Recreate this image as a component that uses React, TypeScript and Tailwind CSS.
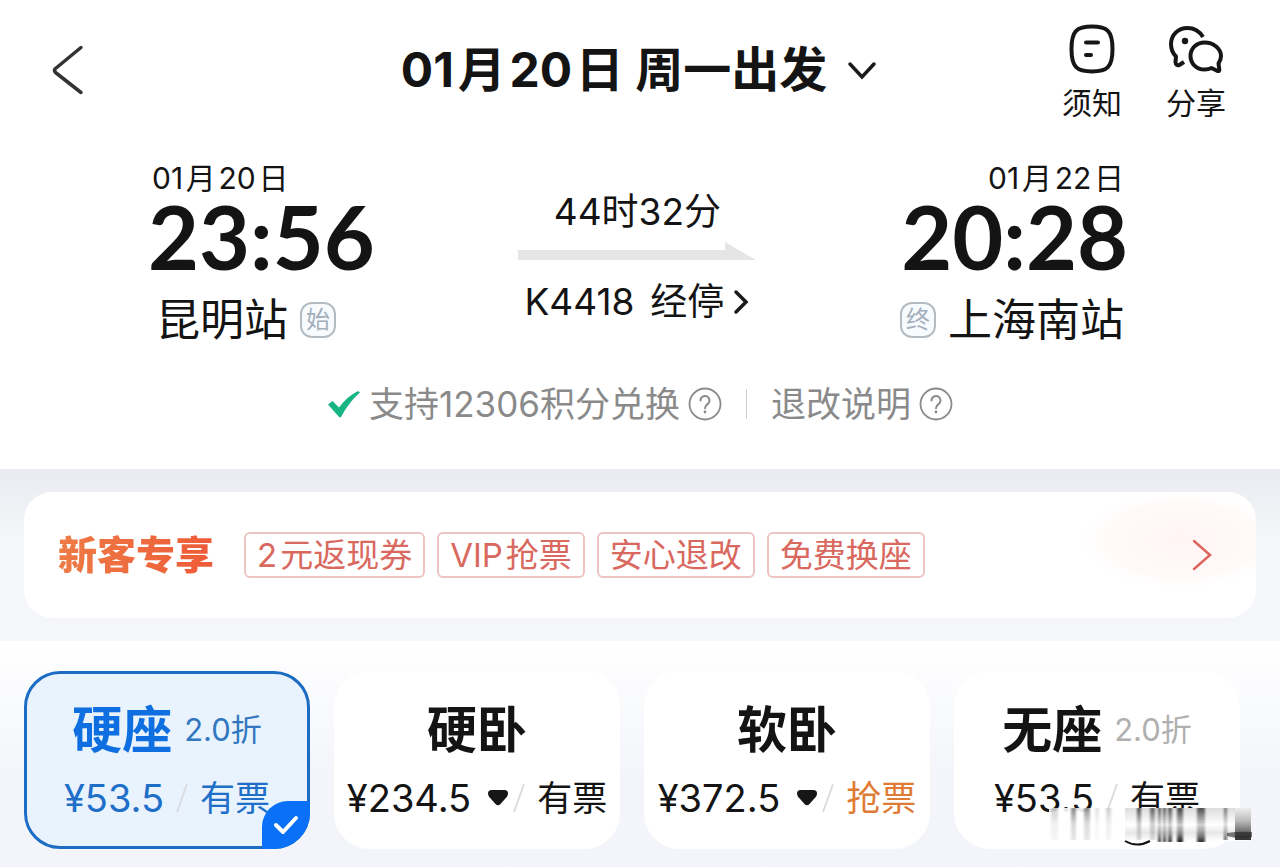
import { useState } from "react";

type Seat = {
    id: string;
    name: string;
    discount?: string;
    price: string;
    status: string;
    hasTiers?: boolean;
    grab?: boolean;
};

const SEATS: Seat[] = [
    { id: "hard-seat", name: "硬座", discount: "2.0折", price: "¥53.5", status: "有票" },
    { id: "hard-sleeper", name: "硬卧", price: "¥234.5", status: "有票", hasTiers: true },
    { id: "soft-sleeper", name: "软卧", price: "¥372.5", status: "抢票", hasTiers: true, grab: true },
    { id: "standing", name: "无座", discount: "2.0折", price: "¥53.5", status: "有票" },
];

// \u200a = hair space between latin and hanzi
const PERKS = ["2\u200a元返现券", "VIP\u200a抢票", "安心退改", "免费换座"];

// x, width, opacity
const STREAKS = [
    [4, 7, 0.2],
    [24, 5, 0.5],
    [37, 6, 0.45],
    [48, 4, 0.12],
    [59, 5, 0.2],
    [90, 4, 0.7],
    [103, 5, 0.6],
    [111, 3, 0.85],
    [116, 3, 0.85],
    [121, 4, 0.85],
    [130, 6, 0.95],
    [150, 8, 0.85],
    [177, 3, 0.7],
];

function QuestionIcon() {
    return (
        <svg width="34" height="34" viewBox="0 0 34 34" fill="none" stroke="#8a8a8a" aria-hidden="true">
            <circle cx="17" cy="17" r="15.500" strokeWidth="1.800" />
            <path
                d="M12.500 13.500a4.500 4.500 0 1 1 7 3.700c-1.700 1.100-2.500 1.800-2.500 4"
                strokeWidth="2"
                strokeLinecap="round"
            />
            <circle cx="17" cy="25" r="1.400" fill="#8a8a8a" stroke="none" />
        </svg>
    );
}

function Header() {
    return (
        <header className="flex items-center justify-between px-12 pt-6">
            <button aria-label="返回" className="w-[168px] pb-1">
                <svg width="40" height="50" viewBox="0 0 40 50" fill="none">
                    <path
                        d="M33 2.500 7.500 23.500q-2 2 0 4L33 47.500"
                        stroke="#333"
                        strokeWidth="3.500"
                        strokeLinecap="round"
                        strokeLinejoin="round"
                    />
                </svg>
            </button>

            <button className="flex items-center gap-5 pb-1 text-[48px] leading-[60px] font-bold">
                <h1>{"01\u200a月\u200a20\u200a日 周一出发"}</h1>
                <svg width="30" height="20" viewBox="0 0 30 20" fill="none" aria-hidden="true">
                    <path d="m3 4 12 13L27 4" stroke="#1a1a1a" strokeWidth="3.500" strokeLinecap="round" />
                </svg>
            </button>

            <div className="flex gap-11 pr-1.5 text-[30px] leading-[34px]">
                <button className="flex flex-col items-center gap-3">
                    <svg width="48" height="50" viewBox="0 0 48 50" fill="none" stroke="#161616" aria-hidden="true">
                        <path
                            d="M24 2.500c15 0 20.500 4 20.500 22.500S39 47.500 24 47.500 3.500 43.500 3.500 25 9 2.500 24 2.500Z"
                            strokeWidth="4"
                        />
                        <path d="M18 18.500h12M18 31h5" strokeWidth="4" strokeLinecap="round" />
                    </svg>
                    须知
                </button>
                <button className="flex flex-col items-center gap-3">
                    <svg width="58" height="50" viewBox="0 0 58 50" fill="none" stroke="#161616" aria-hidden="true">
                        <path
                            d="M36 13C32 6.500 26.500 4 20.500 4 11 4 4 11 4 20c0 6 2 9.500 5 12.500L8.500 38q.3 4 3.800 3l4.700-3"
                            strokeWidth="4"
                            strokeLinejoin="round"
                        />
                        <circle cx="18" cy="17" r="3.200" fill="#161616" stroke="none" />
                        <path
                            d="M37.500 18.500C29.500 18.500 23.500 24.500 23.500 32S29.500 45.500 37.500 45.500q4 0 7-1.500l6 3q2 .5 1.800-1.500l-.8-6q2.500-3.500 2.500-7.500C54 24.500 46.500 18.500 37.500 18.500Z"
                            strokeWidth="4"
                            strokeLinejoin="round"
                        />
                    </svg>
                    分享
                </button>
            </div>
        </header>
    );
}

function StationBadge({ text }: { text: string }) {
    return (
        <span className="grid h-9 w-9 place-items-center rounded-xl border-2 border-[#b4bcc2] bg-[#f8fbfd] text-[24px] leading-none text-[#a3afbc]">
            {text}
        </span>
    );
}

function Trip() {
    return (
        <div className="mt-10 flex items-start justify-between pr-[152px] pl-[148px]">
            <div>
                <div className="pl-1 text-[30px] leading-[36px]">{"01\u200a月\u200a20\u200a日"}</div>
                <div className="font-[Lato] text-[88px] leading-[80px] font-bold">23:56</div>
                <div className="mt-5 flex items-center gap-3 pl-2 text-[44px] leading-[48px]">
                    昆明站
                    <StationBadge text="始" />
                </div>
            </div>

            <div className="flex flex-col items-center pt-7 text-[37px] leading-[48px]">
                <div>44时32分</div>
                <svg className="mt-1" width="238" height="22" viewBox="0 0 238 22" aria-hidden="true">
                    <path d="M0 10h207V2l31 18H0Z" fill="#e5e5e5" />
                </svg>
                <button className="mt-4 flex items-center gap-2">
                    <span className="mr-2">K4418</span>
                    经停
                    <svg width="18" height="28" viewBox="0 0 18 28" fill="none" aria-hidden="true">
                        <path d="m4 4 10 10L4 24" stroke="#1a1a1a" strokeWidth="3.500" strokeLinecap="round" />
                    </svg>
                </button>
            </div>

            <div className="flex flex-col items-end">
                <div className="pr-1 text-[30px] leading-[36px]">{"01\u200a月\u200a22\u200a日"}</div>
                <div className="font-[Lato] text-[88px] leading-[80px] font-bold">20:28</div>
                <div className="mt-5 flex items-center gap-3 pr-1 text-[44px] leading-[48px]">
                    <StationBadge text="终" />
                    上海南站
                </div>
            </div>
        </div>
    );
}

function Notes() {
    return (
        <div className="mt-10 flex items-center justify-center text-[35px] leading-[40px] text-[#8a8a8a]">
            <svg className="mr-2" width="34" height="30" viewBox="0 0 34 30" aria-hidden="true">
                <path d="M1 15.500 5.500 12l6.500 6.500Q20 7.500 31 2l2 1.500Q22 13 14 28l-1.500.5Z" fill="#17b583" />
            </svg>
            <button className="flex items-center gap-2">
                支持12306积分兑换
                <QuestionIcon />
            </button>
            <span className="mx-6 h-[30px] w-px bg-[#cfcfcf]" />
            <button className="flex items-center gap-2">
                退改说明
                <QuestionIcon />
            </button>
        </div>
    );
}

function PromoCard() {
    return (
        <section className="bg-linear-to-b from-[#e9ebf0] to-[#f4f6fa] to-40% px-6 py-[23px]">
            <a
                href="#newcomer"
                className="flex items-center rounded-[28px] bg-white bg-[radial-gradient(ellipse_100px_48px_at_94%_38%,#fff5f4_0%,#fff9f8_70%,transparent_100%)] py-10 pr-11 pl-[34px]"
            >
                <span className="bg-linear-to-r from-[#ee7b45] to-[#ee5a38] bg-clip-text text-[39px] leading-[46px] font-black text-transparent">
                    新客专享
                </span>
                <ul className="ml-[30px] flex flex-1 gap-3 text-[33px] leading-[42px] text-[#d9695f]">
                    {PERKS.map((perk) => (
                        <li key={perk} className="rounded-md border-2 border-[#edc4c2] px-[11px]">
                            {perk}
                        </li>
                    ))}
                </ul>
                <svg width="20" height="32" viewBox="0 0 20 32" fill="none" aria-hidden="true">
                    <path d="m2 2 16 14L2 30" stroke="#dd655f" strokeWidth="2.500" strokeLinecap="round" />
                </svg>
            </a>
        </section>
    );
}

function Streaks() {
    return (
        <svg
            className="absolute -right-4 bottom-0"
            width="206"
            height="38"
            viewBox="0 0 206 38"
            aria-hidden="true"
        >
            <defs>
                <linearGradient id="streak" x1="0" y1="0" x2="0" y2="1">
                    <stop offset="0" stopColor="#111" stopOpacity="0.8" />
                    <stop offset="0.5" stopColor="#111" stopOpacity="0.2" />
                    <stop offset="0.75" stopColor="#111" stopOpacity="0.5" />
                    <stop offset="1" stopColor="#111" />
                </linearGradient>
                <linearGradient id="streakLight" x1="0" y1="0" x2="0" y2="1">
                    <stop offset="0" stopColor="#111" />
                    <stop offset="0.5" stopColor="#111" stopOpacity="0.3" />
                    <stop offset="1" stopColor="#111" stopOpacity="0.2" />
                </linearGradient>
                <linearGradient id="fade" x1="0" y1="0" x2="0" y2="1">
                    <stop offset="0" stopColor="#ddd" />
                    <stop offset="0.5" stopColor="#fff" />
                    <stop offset="0.75" stopColor="#e8e8e8" />
                    <stop offset="1" stopColor="#fff" />
                </linearGradient>
                <linearGradient id="edge" x1="0" y1="0" x2="0" y2="1">
                    <stop offset="0" stopColor="#eee" />
                    <stop offset="0.4" stopColor="#bbb" />
                    <stop offset="0.7" stopColor="#777" />
                    <stop offset="1" stopColor="#333" />
                </linearGradient>
                <filter id="soft" x="-50%" width="200%" y="0" height="100%">
                    <feGaussianBlur stdDeviation="0.8 0" />
                </filter>
            </defs>
            <rect x="2" width="202" height="33" fill="#fff" fillOpacity="0.9" />
            <rect x="78" width="126" height="33" fill="url(#fade)" />
            {STREAKS.map(([x, w, o]) => (
                <rect
                    key={x}
                    x={x}
                    width={w}
                    height={o > 0.8 ? 34 : 32}
                    rx="1"
                    fill={x < 110 ? "url(#streakLight)" : "url(#streak)"}
                    opacity={o}
                    filter="url(#soft)"
                />
            ))}
            <rect x="188" width="16" height="32" fill="url(#edge)" />
            <path d="M180 25q12-2 25-1v5q-10 3-25-1Z" fill="#222" opacity="0.6" />
            <path d="M78 33q12 7 25 0" fill="none" stroke="#111" strokeWidth="2" />
        </svg>
    );
}

function SeatCard({ seat, selected, onSelect }: { seat: Seat; selected: boolean; onSelect: () => void }) {
    return (
        <button
            onClick={onSelect}
            aria-pressed={selected}
            className={`relative flex flex-col items-center rounded-[36px] border-3 pt-6 pb-6 whitespace-nowrap ${
                selected ? "border-[#1c6cc4] bg-[#e9f3fd] text-[#1f6fc9]" : "border-white bg-white"
            }`}
        >
            <span className="flex items-center gap-3 text-[50px] leading-[64px] font-bold">
                <span className={selected ? "text-[#0f6fe0]" : ""}>{seat.name}</span>
                {seat.discount && (
                    <span
                        className={`text-[31px] font-normal ${selected ? "text-[#3277c0]" : "text-[#b0b0b0]"}`}
                    >
                        {seat.discount}
                    </span>
                )}
            </span>

            <span className="mt-3 flex items-center text-[35px] leading-[48px]">
                <span className="text-[38px]">{seat.price}</span>
                {seat.hasTiers && (
                    <svg className="ml-4" width="22" height="18" viewBox="0 0 22 18" aria-hidden="true">
                        <path
                            d="M4.500 1h13q3.500 0 3.500 3.500 0 2-1.500 3.800l-6 6.700q-2.500 2.500-5 0l-6-6.700Q1 6.500 1 4.500 1 1 4.500 1Z"
                            fill="#161616"
                        />
                    </svg>
                )}
                <svg
                    className={seat.hasTiers ? "mr-3 ml-1" : "mx-3"}
                    width="12"
                    height="32"
                    viewBox="0 0 12 32"
                    aria-hidden="true"
                >
                    <path d="M11 2 1 30" stroke="#d9dce0" strokeWidth="2" />
                </svg>
                <span className={seat.grab ? "text-[#e07b35]" : ""}>{seat.status}</span>
            </span>

            {selected && (
                <span className="absolute -right-[3px] -bottom-[3px] grid h-12 w-12 place-items-center rounded-tl-[26px] rounded-br-[36px] bg-[#0a70f5]">
                    <svg width="26" height="20" viewBox="0 0 26 20" fill="none" aria-hidden="true">
                        <path
                            d="m3 10 7 7L23 3"
                            stroke="#fff"
                            strokeWidth="4"
                            strokeLinecap="round"
                            strokeLinejoin="round"
                        />
                    </svg>
                </span>
            )}
            {seat.id === "standing" && <Streaks />}
        </button>
    );
}

export default function App() {
    const [seatId, setSeatId] = useState("hard-seat");

    return (
        <main className="flex min-h-screen flex-col overflow-x-hidden bg-white font-[Inter,'Noto_Sans_CJK_SC',sans-serif] text-[#141414]">
            <div className="pb-[45px]">
                <Header />
                <Trip />
                <Notes />
            </div>

            <PromoCard />

            <section className="grid flex-1 grid-cols-4 items-start gap-6 bg-linear-to-b from-white to-[#f3f5fa] to-60% pt-[30px] pr-10 pb-4 pl-6">
                {SEATS.map((seat) => (
                    <SeatCard
                        key={seat.id}
                        seat={seat}
                        selected={seat.id === seatId}
                        onSelect={() => setSeatId(seat.id)}
                    />
                ))}
            </section>
        </main>
    );
}
